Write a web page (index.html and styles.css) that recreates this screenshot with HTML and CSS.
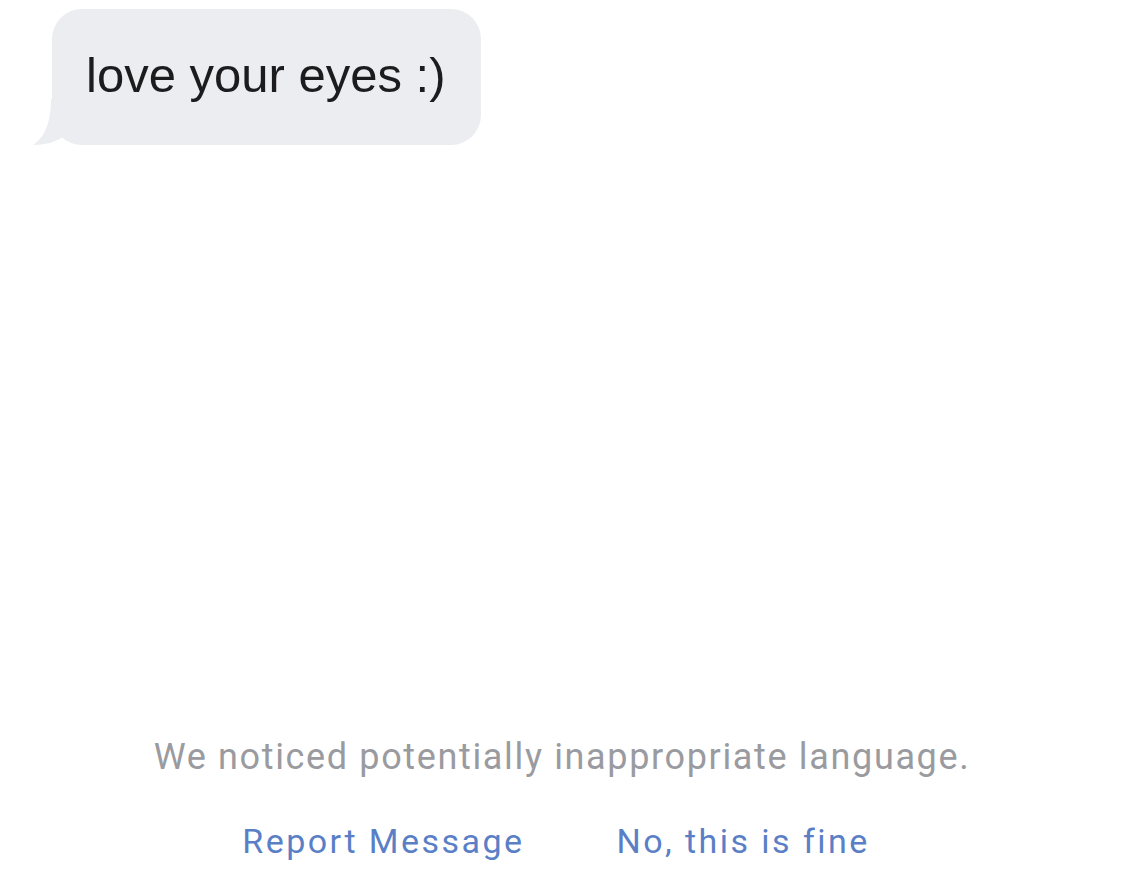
FILE: index.html
```html
<!DOCTYPE html>
<html>
<head>
<meta charset="utf-8">
<link rel="stylesheet" href="styles.css">
</head>
<body>
<div class="screen">
  <div class="thread">
    <div class="bubble">
      <svg class="tail" width="40" height="46" viewBox="0 0 40 46"><path d="M18 0 C18 25 11 39 0 46 C12 46 22 43 30 38 L40 40 L40 0 Z" fill="#ECEDF0"/></svg>
      <span class="msg">love your eyes :)</span>
    </div>
  </div>
  <div class="notice">
    <p class="warn">We noticed potentially inappropriate language.</p>
    <div class="actions">
      <a class="act">Report Message</a>
      <a class="act">No, this is fine</a>
    </div>
  </div>
</div>
</body>
</html>
```
FILE: styles.css
```css
html, body { margin: 0; padding: 0; background: #fff; }
.screen { width: 1124px; height: 875px; display: flex; flex-direction: column; justify-content: space-between; }
.thread { padding: 9px 0 0 52px; }
.bubble { position: relative; display: inline-flex; align-items: center; height: 136px; box-sizing: border-box; padding: 0 35px 0 34px; background: #ECEDF0; border-radius: 30px; }
.tail { position: absolute; left: -19px; bottom: 0; }
.msg { position: relative; font-family: "Liberation Sans", Arial, sans-serif; font-size: 49px; color: #1c1c1e; line-height: 1; top: -2px; }
.notice { display: flex; flex-direction: column; align-items: center; padding-bottom: 14px; font-family: Roboto, sans-serif; }
.warn { margin: 0; font-size: 36px; letter-spacing: 1.65px; color: #9A9BA0; line-height: 40px; }
.actions { display: flex; gap: 92px; margin-top: 44px; padding-right: 12px; }
.act { font-size: 34px; letter-spacing: 2.45px; color: #5A7FC6; line-height: 40px; }
```
